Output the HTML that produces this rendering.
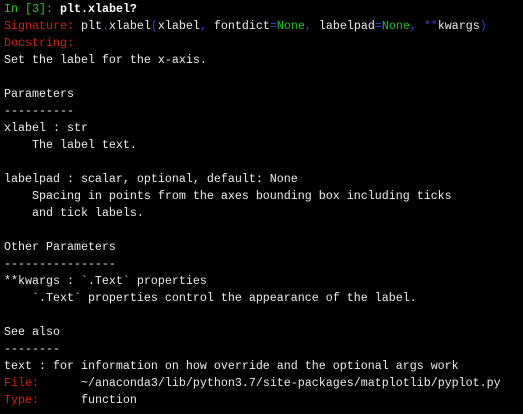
<html><head><style>
body{margin:0;background:#000;width:523px;height:414px;overflow:hidden}
pre{margin:0;padding:1px 0 0 4px;font-family:"Liberation Mono",monospace;font-size:11.67px;line-height:17px;color:#ececec}
.g{color:#169016}.G{color:#22d022}.n{color:#1fc01f}.r{color:#d0200f}.b{color:#2c45e0}.w{font-weight:bold;color:#fff}
</style></head><body><pre><span class="g">In [</span><span class="G">3</span><span class="g">]:</span> <span class="w">plt.xlabel?</span>
<span class="r">Signature:</span> plt<span class="b">.</span>xlabel<span class="b">(</span>xlabel<span class="b">,</span> fontdict<span class="b">=</span><span class="n">None</span><span class="b">,</span> labelpad<span class="b">=</span><span class="n">None</span><span class="b">,</span> <span class="b">**</span>kwargs<span class="b">)</span>
<span class="r">Docstring:</span>
Set the label for the x-axis.

Parameters
----------
xlabel : str
    The label text.

labelpad : scalar, optional, default: None
    Spacing in points from the axes bounding box including ticks
    and tick labels.

Other Parameters
----------------
**kwargs : `.Text` properties
    `.Text` properties control the appearance of the label.

See also
--------
text : for information on how override and the optional args work
<span class="r">File:</span>      ~/anaconda3/lib/python3.7/site-packages/matplotlib/pyplot.py
<span class="r">Type:</span>      function</pre></body></html>
